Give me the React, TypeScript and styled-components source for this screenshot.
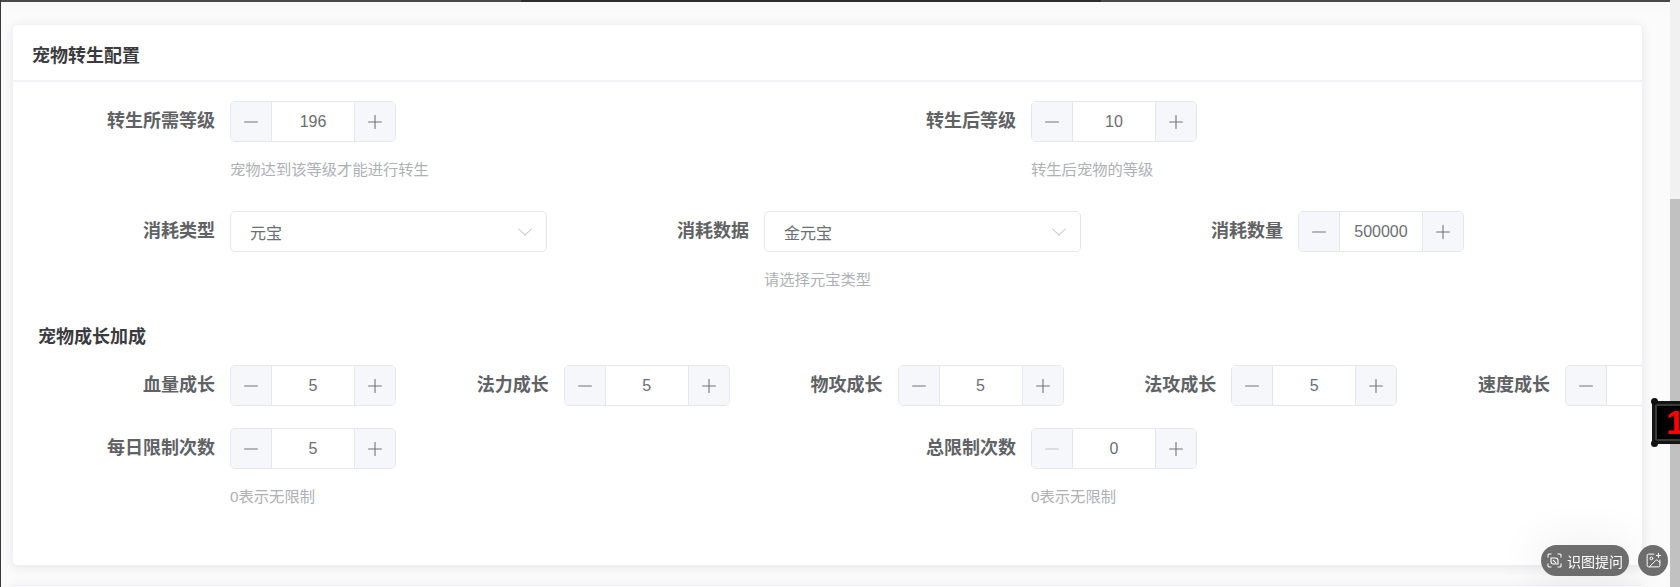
import React from "react";
import styled, { createGlobalStyle } from "styled-components";
import { ChevronDown, ImagePlus, Minus, Plus } from "lucide-react";

const Global = createGlobalStyle`
  html, body { margin: 0; padding: 0; height: 587px; overflow: hidden; background: #fbfbfc; }
  * { box-sizing: border-box; }
  body { font-family: "Liberation Sans", "Noto Sans CJK SC", sans-serif; }
`;

const Viewport = styled.div`
  position: relative;
  width: 1680px;
  height: 587px;
  display: flex;
  overflow: hidden;
  border-left: 1px solid #3a3a3a;
`;

const Main = styled.main`
  flex: 1;
  min-width: 0;
  display: flex;
  flex-direction: column;
  overflow: hidden;
  background: #fbfbfc;
`;

const TopEdge = styled.div`
  height: 2px;
  flex: none;
  background: linear-gradient(
    90deg,
    #4a4a4a 0 520px,
    #2c2c2c 520px 1100px,
    #4a4a4a 1100px
  );
  box-shadow: 0 2px 12px rgba(0, 0, 0, 0.08);
`;

const Card = styled.section`
  flex: none;
  height: 542px;
  margin: 22px 27px 0 11px;
  background: #fff;
  border: 1px solid #eef0f6;
  border-radius: 5px;
  box-shadow: 0 2px 12px rgba(0, 0, 0, 0.08);
  overflow: hidden;
`;

const NextCard = styled.div`
  flex: none;
  height: 10px;
  margin: 19px 27px 0 11px;
  background: #fff;
  border-top: 1px solid #eef0f6;
  box-shadow: 0 0 12px rgba(0, 0, 0, 0.06);
`;

const CardHeader = styled.header`
  height: 57px;
  padding: 2px 19px 0;
  display: flex;
  align-items: center;
  border-bottom: 2px solid #f2f3f9;
  font-size: 18px;
  font-weight: 700;
  color: #3a3b3e;
`;

const CardBody = styled.div`
  padding: 19px 0 0 17px;
`;

const Row = styled.div<{ $gap?: number }>`
  width: 1602px;
  display: flex;
  align-items: flex-start;
  margin-bottom: ${(p) => p.$gap ?? 0}px;
`;

const Col = styled.div<{ $span: number }>`
  flex: 0 0 ${(p) => (p.$span / 24) * 100}%;
  display: flex;
  min-width: 0;
`;

const Label = styled.label`
  flex: 0 0 185px;
  height: 41px;
  line-height: 40px;
  text-align: right;
  font-size: 18px;
  font-weight: 700;
  color: #606266;
  white-space: nowrap;
`;

const Control = styled.div`
  margin-left: 15px;
  display: flex;
  flex-direction: column;
  align-items: flex-start;
`;

const Hint = styled.div`
  height: 20px;
  line-height: 20px;
  margin-top: 18px;
  font-size: 15.3px;
  color: #aeb0b5;
  white-space: nowrap;
`;

const Stepper = styled.div`
  width: 166px;
  height: 41px;
  display: flex;
  flex: none;
  border: 1px solid #e4e7ed;
  border-radius: 5px;
  overflow: hidden;
  background: #fff;
`;

const StepButton = styled.button<{ $side: "left" | "right" }>`
  flex: 0 0 41px;
  padding: 0;
  display: flex;
  align-items: center;
  justify-content: center;
  background: #f5f7fa;
  color: ${(p) => (p.disabled ? "#c0c4cc" : "#71747a")};
  border: 0;
  border-${(p) => (p.$side === "left" ? "right" : "left")}: 1px solid #e4e7ed;
`;

const StepValue = styled.div`
  flex: 1;
  text-align: center;
  line-height: 39px;
  font-size: 16px;
  color: #6b6e73;
`;

const Select = styled.div`
  width: 317px;
  height: 41px;
  padding: 0 8px 0 19px;
  display: flex;
  align-items: center;
  justify-content: space-between;
  border: 1px solid #e4e7ed;
  border-radius: 5px;
  font-size: 16px;
  color: #6b6e73;
  svg { color: #c0c4cc; }
`;

const SectionTitle = styled.h3`
  margin: 0 0 18px 8px;
  height: 20px;
  line-height: 20px;
  font-size: 18px;
  font-weight: 700;
  color: #3a3b3e;
`;

const ScrollTrack = styled.div`
  flex: 0 0 10px;
  display: flex;
  flex-direction: column;
  background: #f1f1f1;
`;

const ScrollThumb = styled.div`
  flex: 1;
  margin-top: 199px;
  background: #c1c1c1;
`;

const Badge = styled.div`
  position: fixed;
  left: 1652px;
  top: 401px;
  width: 40px;
  height: 43px;
  display: flex;
  align-items: center;
  padding-left: 11px;
  background: #000;
  border: 3px solid #151515;
  box-shadow: inset 0 0 0 2px #3a3a3a;
  color: #ff0000;
  font-size: 34px;
  font-weight: 700;
  overflow: hidden;
`;

const Knob = styled.span<{ $top: boolean }>`
  position: fixed;
  left: 1651px;
  top: ${(p) => (p.$top ? 398 : 440)}px;
  width: 7px;
  height: 7px;
  border-radius: 50%;
  background: #111;
`;

const Floaters = styled.div`
  position: fixed;
  left: 1541px;
  top: 545px;
  display: flex;
  gap: 9px;
`;

const PillButton = styled.button`
  width: 88px;
  height: 31px;
  padding: 0;
  display: flex;
  align-items: center;
  justify-content: center;
  gap: 5px;
  border: 0;
  border-radius: 16px;
  background: #6d6d6d;
  color: #fff;
  font-family: inherit;
  font-size: 14px;
  box-shadow: 0 0 40px 10px rgba(0, 0, 0, 0.05);
`;

const RoundButton = styled.button`
  width: 30px;
  height: 31px;
  padding: 0;
  display: flex;
  align-items: center;
  justify-content: center;
  border: 0;
  border-radius: 50%;
  background: #6d6d6d;
  color: #fff;
`;

const ScanLeaf = () => (
  <svg width="15" height="15" viewBox="0 0 15 15" fill="none" stroke="currentColor" strokeWidth="1.1">
    <path d="M1 4.5V2a1 1 0 0 1 1-1h2.5M10.5 1H13a1 1 0 0 1 1 1v2.5M14 10.5V13a1 1 0 0 1-1 1h-2.5M4.5 14H2a1 1 0 0 1-1-1v-2.5" />
    <path d="M4 5h4.5a2.5 2.5 0 0 1 2.5 2.5V11H6.5A2.5 2.5 0 0 1 4 8.5Z" />
    <path d="M6 7l3 3" />
  </svg>
);

const NumberStepper = ({ value, atMin }: { value: number; atMin?: boolean }) => (
  <Stepper>
    <StepButton $side="left" disabled={atMin}>
      <Minus size={22} strokeWidth={1.2} />
    </StepButton>
    <StepValue>{value}</StepValue>
    <StepButton $side="right">
      <Plus size={22} strokeWidth={1.2} />
    </StepButton>
  </Stepper>
);

const Field = ({
  span,
  label,
  hint,
  children,
}: {
  span: number;
  label: string;
  hint?: string;
  children: React.ReactNode;
}) => (
  <Col $span={span}>
    <Label>{label}</Label>
    <Control>
      {children}
      {hint && <Hint>{hint}</Hint>}
    </Control>
  </Col>
);

const Dropdown = ({ value }: { value: string }) => (
  <Select>
    {value}
    <ChevronDown size={26} strokeWidth={0.95} />
  </Select>
);

const growth = ["血量成长", "法力成长", "物攻成长", "法攻成长", "速度成长"];

export default function App() {
  return (
    <Viewport>
      <Global />
      <Main>
        <TopEdge />
        <Card>
          <CardHeader>宠物转生配置</CardHeader>
          <CardBody>
            <Row $gap={31}>
              <Field span={12} label="转生所需等级" hint="宠物达到该等级才能进行转生">
                <NumberStepper value={196} />
              </Field>
              <Field span={12} label="转生后等级" hint="转生后宠物的等级">
                <NumberStepper value={10} />
              </Field>
            </Row>
            <Row $gap={37}>
              <Field span={8} label="消耗类型">
                <Dropdown value="元宝" />
              </Field>
              <Field span={8} label="消耗数据" hint="请选择元宝类型">
                <Dropdown value="金元宝" />
              </Field>
              <Field span={8} label="消耗数量">
                <NumberStepper value={500000} />
              </Field>
            </Row>
            <SectionTitle>宠物成长加成</SectionTitle>
            <Row $gap={22}>
              {growth.map((g) => (
                <Field key={g} span={5} label={g}>
                  <NumberStepper value={5} />
                </Field>
              ))}
            </Row>
            <Row>
              <Field span={12} label="每日限制次数" hint="0表示无限制">
                <NumberStepper value={5} />
              </Field>
              <Field span={12} label="总限制次数" hint="0表示无限制">
                <NumberStepper value={0} atMin />
              </Field>
            </Row>
          </CardBody>
        </Card>
        <NextCard />
      </Main>
      <ScrollTrack>
        <ScrollThumb />
      </ScrollTrack>
      <Badge>1</Badge>
      <Knob $top />
      <Knob $top={false} />
      <Floaters>
        <PillButton>
          <ScanLeaf />
          识图提问
        </PillButton>
        <RoundButton>
          <ImagePlus size={17} strokeWidth={1.4} />
        </RoundButton>
      </Floaters>
    </Viewport>
  );
}
